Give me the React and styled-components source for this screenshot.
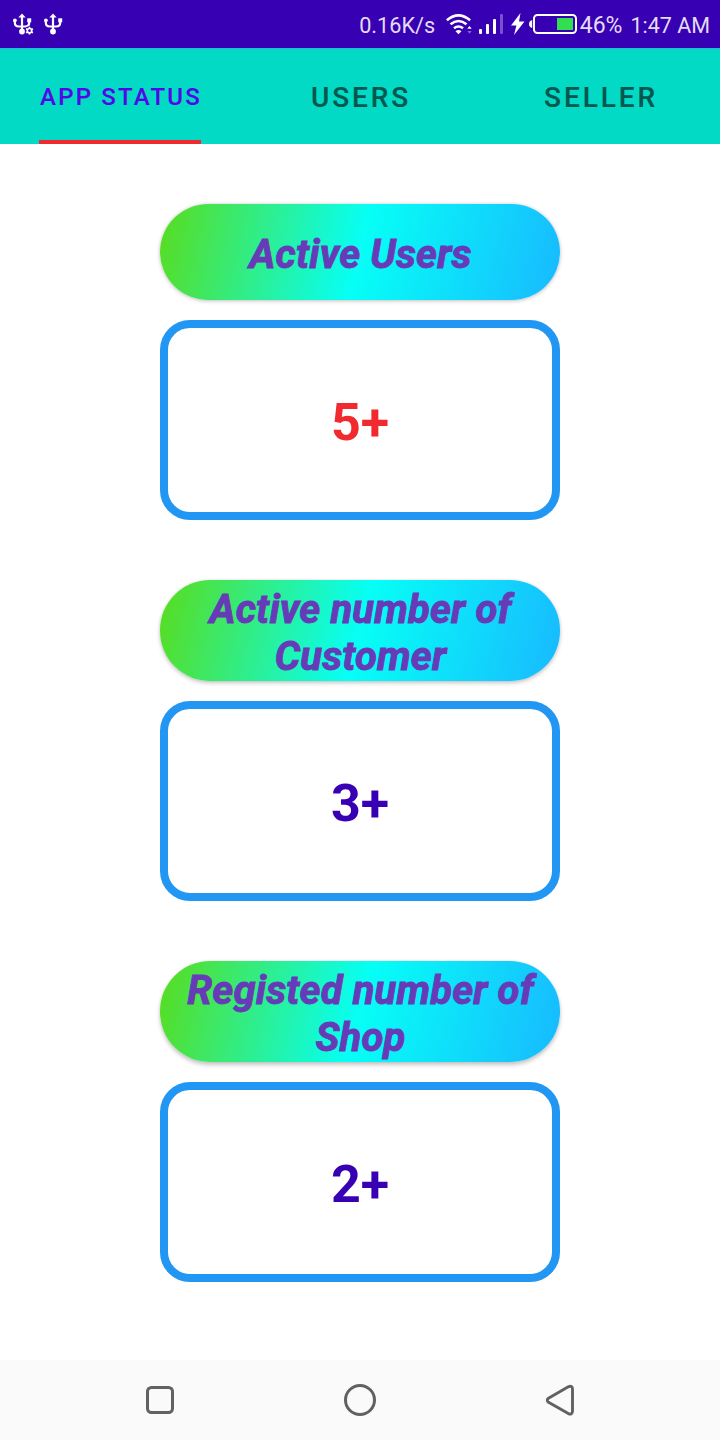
import React from "react";
import styled, { createGlobalStyle } from "styled-components";

const GlobalStyle = createGlobalStyle`
  *, *::before, *::after { box-sizing: border-box; }
  body { margin: 0; background: #ffffff; font-family: Roboto, sans-serif; }
`;

const Screen = styled.div`
  display: flex;
  flex-direction: column;
  width: 720px;
  height: 1440px;
  background: #ffffff;
`;

const StatusBar = styled.header`
  display: flex;
  justify-content: space-between;
  height: 48px;
  padding: 0 10px 0 13px;
  background: #3700b3;
`;

const StatusGroup = styled.div`
  display: flex;
  align-items: flex-start;
`;

const StatusIcon = styled.svg`
  display: block;
  flex: none;
  height: 48px;
  margin-left: ${({ $gap = 0 }) => $gap}px;
`;

const StatusText = styled.span`
  margin-left: ${({ $gap = 0 }) => $gap}px;
  padding-top: 2px;
  color: #e4dbf5;
  font-size: ${({ $size = 21.5 }) => $size}px;
  line-height: 48px;
  white-space: nowrap;
`;

const TabBar = styled.nav`
  display: grid;
  grid-template-columns: 240px 240px 240px;
  height: 96px;
  background: #03dac5;
  border-top: 1px solid #26b9df;
`;

const Tab = styled.button`
  display: flex;
  justify-content: center;
  padding: 0;
  border: 0;
  background: none;
  font-family: inherit;
  font-weight: 500;
  font-size: ${({ $active }) => ($active ? 24 : 28)}px;
  letter-spacing: ${({ $active }) => ($active ? 2.2 : 2.9)}px;
  -webkit-text-stroke: 0.15px currentColor;
  color: ${({ $active }) => ($active ? "#5208e6" : "#02574f")};
`;

const TabLabel = styled.span`
  display: flex;
  align-items: center;
  justify-content: center;
  height: 95px;
  width: ${({ $active }) => ($active ? "162px" : "auto")};
  padding-top: ${({ $active }) => ($active ? 4 : 5)}px;
  padding-left: 2px;
  border-bottom: 4px solid ${({ $active }) => ($active ? "#f02a2e" : "transparent")};
  white-space: nowrap;
`;

const Content = styled.main`
  display: flex;
  flex-direction: column;
  align-items: center;
  gap: 60px;
  flex: 1;
  padding-top: 60px;
`;

const Stat = styled.section`
  display: flex;
  flex-direction: column;
  gap: 20px;
  width: 400px;
`;

const Pill = styled.h2`
  display: flex;
  align-items: center;
  justify-content: center;
  height: ${({ $tall }) => ($tall ? 101 : 96)}px;
  margin: 0;
  padding: 5px 0 0 1px;
  border-radius: 50px;
  background: linear-gradient(
    ${({ $tall }) => ($tall ? 104.2 : 103.5)}deg,
    #5adc1c 0%,
    #06fff6 50%,
    #18b9ff 100%
  );
  box-shadow: 0 ${({ $depth }) => $depth}px 4px rgba(0, 0, 0, 0.22), 0 0 3px rgba(0, 0, 0, 0.08);
  color: #673ab7;
  font-size: 40px;
  font-style: italic;
  font-weight: 700;
  -webkit-text-stroke: 0.9px currentColor;
  letter-spacing: 0.15px;
  line-height: 47px;
  text-align: center;
  white-space: pre-line;
`;

const ValueBox = styled.div`
  display: flex;
  align-items: center;
  justify-content: center;
  height: 200px;
  padding-top: 4px;
  border: 8px solid #2196f3;
  border-radius: 30px;
  color: ${({ $color }) => $color};
  font-size: 52px;
  font-weight: 700;
`;

const NavBar = styled.footer`
  display: flex;
  align-items: center;
  justify-content: space-between;
  height: 80px;
  padding: 0 140px;
  background: #fafafa;
`;

const NavIcon = styled.svg`
  display: block;
  width: 40px;
  height: 40px;
  fill: none;
  stroke: #616161;
  stroke-width: 3;
  stroke-linejoin: round;
`;

function Usb({ gear, gap }) {
  return (
    <StatusIcon $gap={gap} width="22" viewBox="0 0 22 48" fill="none" stroke="#fff" strokeWidth="2.2">
      <path d="M9 17V32M1.8 21v1.5q0 4 4 4h6.4q4 0 4-4V21" />
      <path d="M9 13.5 12.7 17.5H5.3z" fill="#fff" stroke="none" />
      <circle cx="1.9" cy="20.3" r="1.9" fill="#fff" stroke="none" />
      <path d="M14.2 18.3h4v4h-4z" fill="#fff" stroke="none" />
      <circle cx="9" cy="31.5" r="2.9" fill="#fff" stroke="none" />
      {gear && (
        <g>
          <circle cx="16.5" cy="30.7" r="4.5" fill="#3700b3" stroke="none" />
          <circle cx="16.5" cy="30.7" r="2.2" strokeWidth="1.7" />
          <path
            d="M16.5 26.8v1.6M16.5 33v1.6M13.1 28.7l1.4.8M18.5 31.9l1.4.8M13.1 32.7l1.4-.8M18.5 29.5l1.4-.8"
            strokeWidth="1.6"
          />
        </g>
      )}
    </StatusIcon>
  );
}

function Wifi() {
  return (
    <StatusIcon $gap={10} width="28" viewBox="0 0 28 48" fill="none" stroke="#fff" strokeWidth="2.6">
      <path d="M1.9 20.3q11.4-9.8 23.2 0M5.5 24.3q8-6.6 16 0M9 28.3q4.5-3.6 9 0" />
      <path d="M10.5 31.3q3-2.4 6 0l-3 3z" fill="#fff" stroke="none" />
      <path d="m22.3 28.8 2.2-2.7 2.2 2.7z" fill="#fff" stroke="none" />
      <path d="m22.3 31 2.2 2.7 2.2-2.7z" fill="#8761d0" stroke="none" />
    </StatusIcon>
  );
}

function Signal() {
  return (
    <StatusIcon $gap={6} width="25" viewBox="0 0 25 48" fill="#fff">
      <rect x="0" y="29" width="3" height="5" rx="1" />
      <rect x="7" y="24" width="3" height="10" rx="1" />
      <rect x="14" y="19" width="3" height="15" rx="1" />
      <rect x="21" y="14" width="3" height="20" rx="1" fill="#7a50cc" />
    </StatusIcon>
  );
}

function Bolt() {
  return (
    <StatusIcon $gap={7} width="14" viewBox="0 0 14 48" fill="#fff">
      <path d="M9.5 13 0 25.6h5.4L3 35l10.5-13.6H8z" />
    </StatusIcon>
  );
}

function Battery() {
  return (
    <StatusIcon $gap={4} width="49" viewBox="0 0 49 48">
      <path d="M3.2 20q-3.2 1-3.2 4t3.2 4z" fill="#fff" />
      <rect x="5" y="15" width="42" height="18" rx="3.5" fill="none" stroke="#fff" strokeWidth="2" />
      <rect x="28" y="18" width="16" height="12" fill="#32df50" />
    </StatusIcon>
  );
}

const stats = [
  { title: "Active Users", value: "5+", color: "#f02a2e", depth: 1 },
  { title: "Active number of\nCustomer", value: "3+", color: "#3700b3", depth: 2, tall: true },
  { title: "Registed number of\nShop", value: "2+", color: "#3700b3", depth: 3, tall: true },
];

const tabs = ["APP STATUS", "USERS", "SELLER"];

export default function App() {
  return (
    <>
      <GlobalStyle />
      <Screen>
        <StatusBar>
          <StatusGroup>
            <Usb gear />
            <Usb gap={9} />
          </StatusGroup>
          <StatusGroup>
            <StatusText $size={21.7}>0.16K/s</StatusText>
            <Wifi />
            <Signal />
            <Bolt />
            <Battery />
            <StatusText $size={23} $gap={1.5}>46%</StatusText>
            <StatusText $gap={8}>1:47 AM</StatusText>
          </StatusGroup>
        </StatusBar>
        <TabBar>
          {tabs.map((label, i) => (
            <Tab key={label} $active={i === 0}>
              <TabLabel $active={i === 0}>{label}</TabLabel>
            </Tab>
          ))}
        </TabBar>
        <Content>
          {stats.map((s) => (
            <Stat key={s.title}>
              <Pill $tall={s.tall} $depth={s.depth}>{s.title}</Pill>
              <ValueBox $color={s.color}>{s.value}</ValueBox>
            </Stat>
          ))}
        </Content>
        <NavBar>
          <NavIcon viewBox="0 0 40 40">
            <rect x="7.5" y="7.5" width="25" height="25" rx="4" />
          </NavIcon>
          <NavIcon viewBox="0 0 40 40">
            <circle cx="20" cy="20" r="14.5" />
          </NavIcon>
          <NavIcon viewBox="0 0 40 40">
            <path d="M8.5 18.2 28.3 6.8q4.2-1.7 4.2 2.4V31q0 4.2-4.2 2.6L8.5 22.3q-2.4-2 0-4.1z" strokeWidth="2.9" />
          </NavIcon>
        </NavBar>
      </Screen>
    </>
  );
}
